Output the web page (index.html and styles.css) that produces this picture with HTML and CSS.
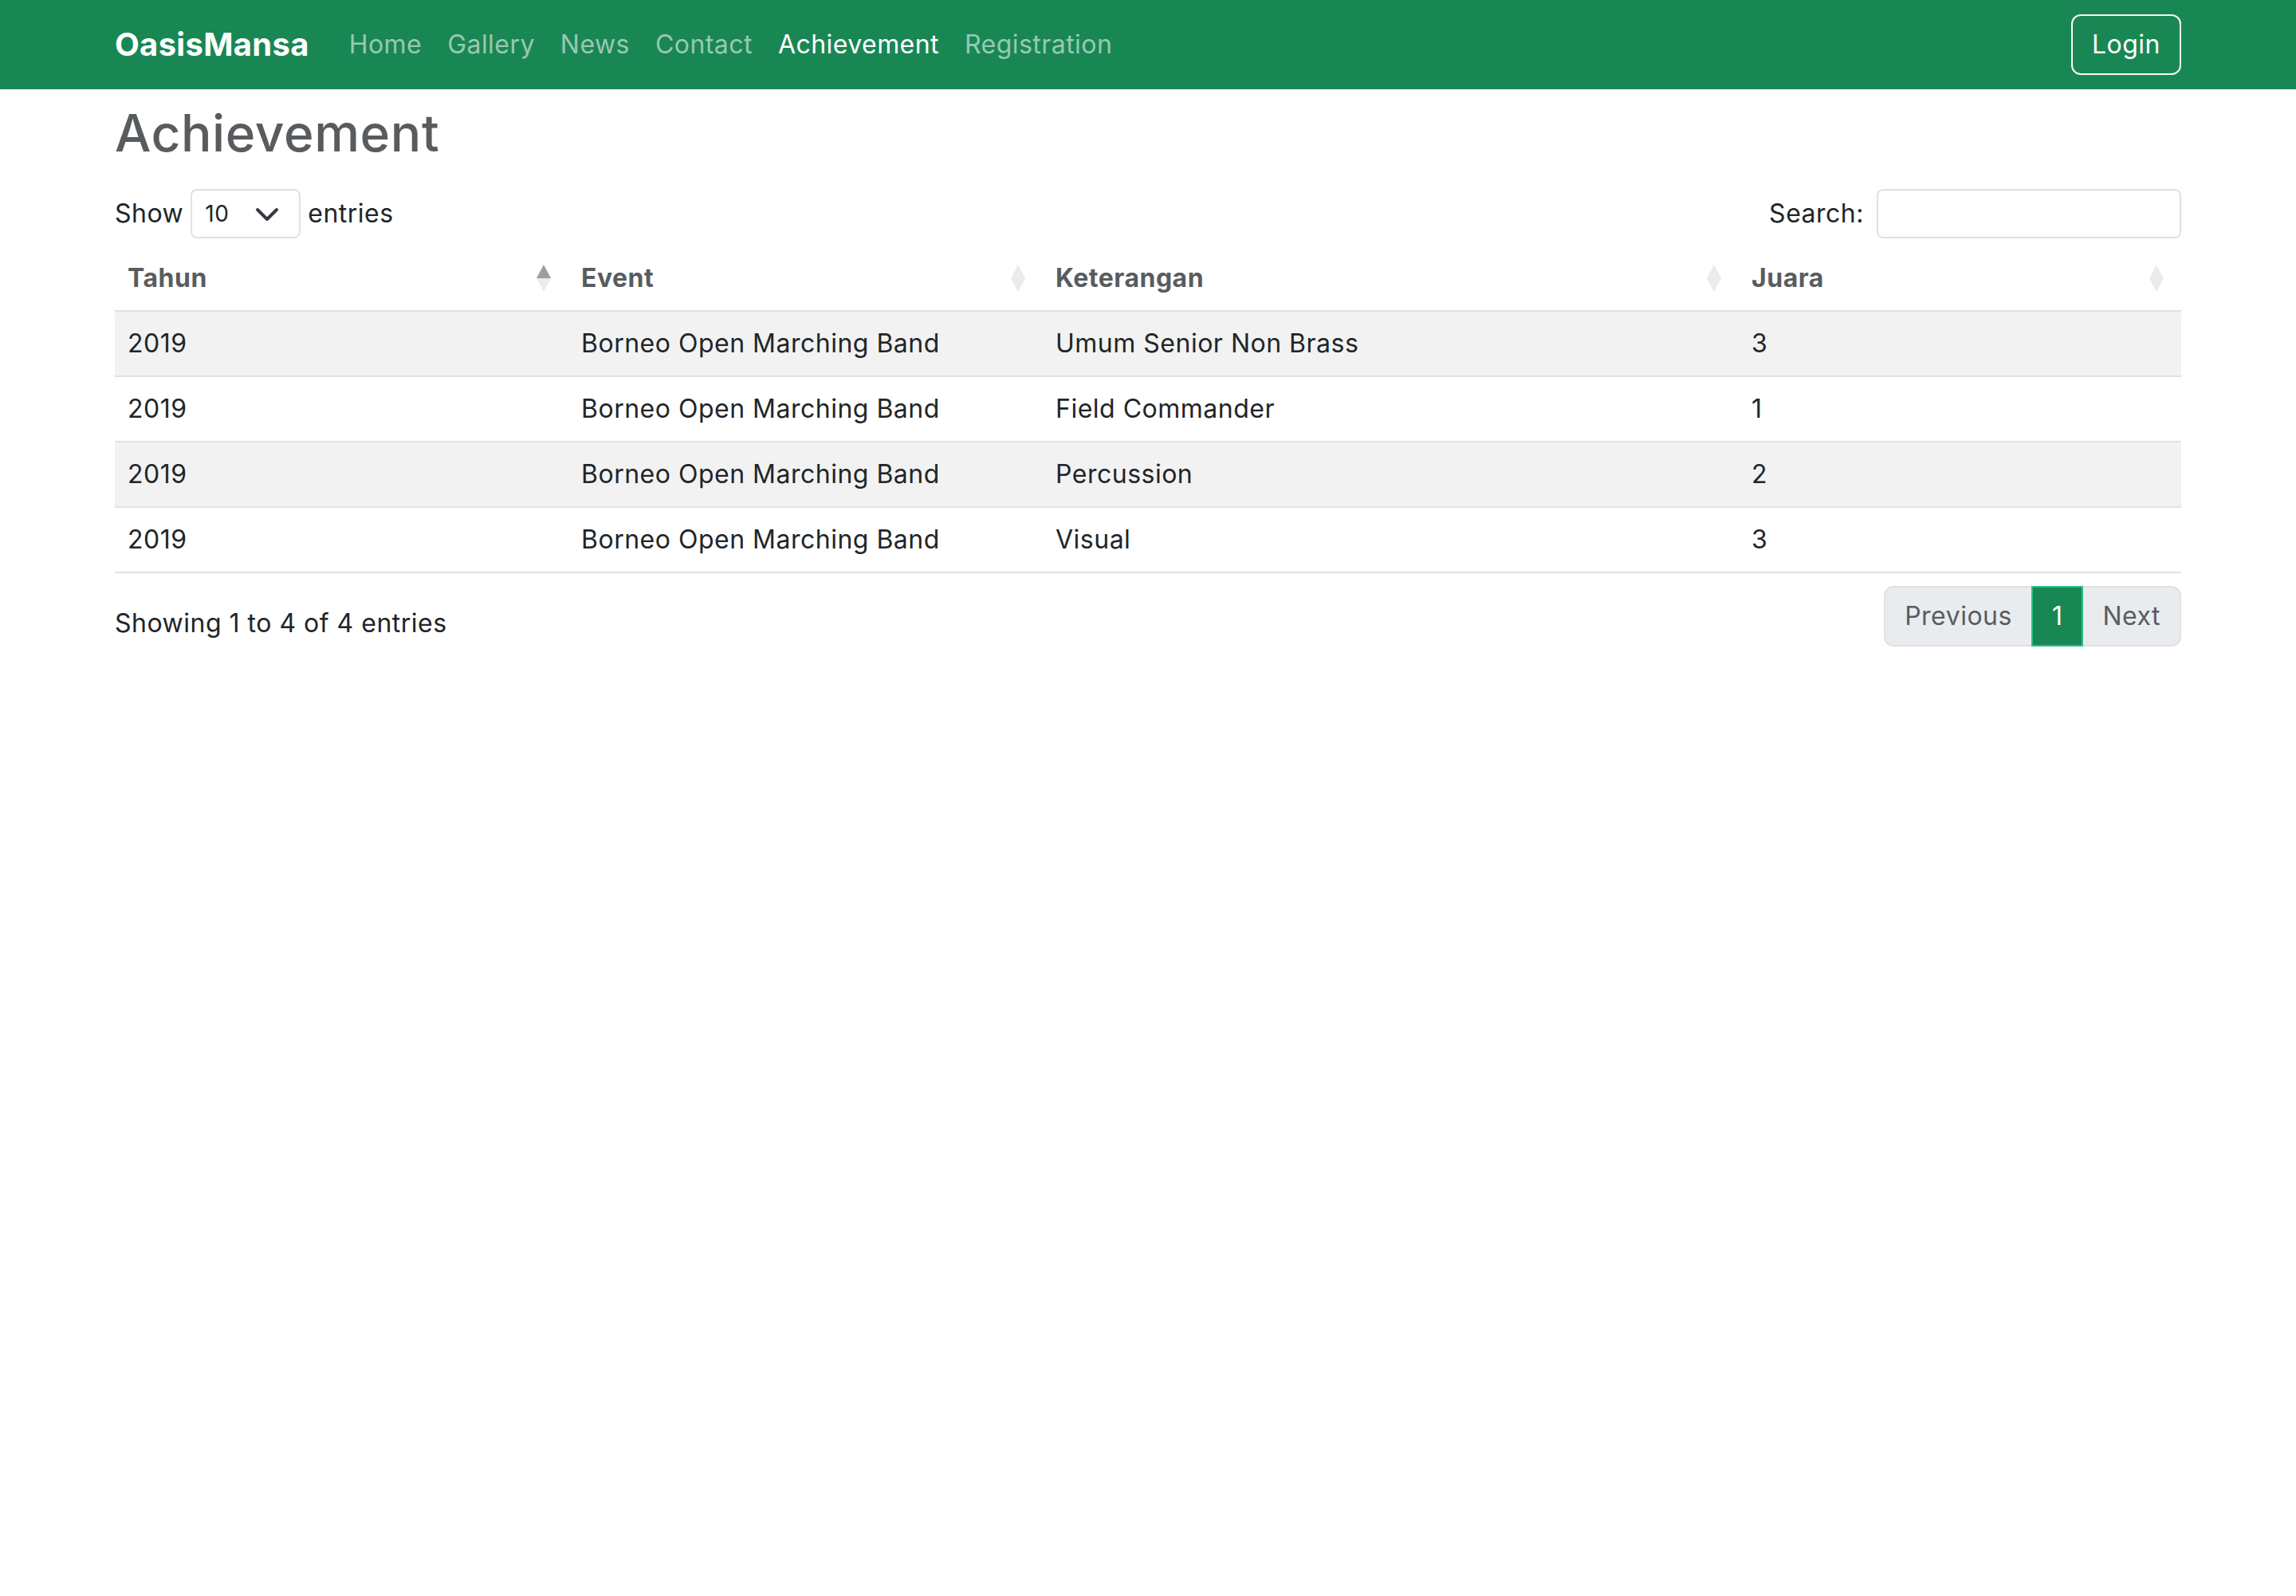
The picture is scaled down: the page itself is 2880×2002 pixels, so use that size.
FILE: index.html
```html
<!DOCTYPE html>
<html lang="en">
<head>
<meta charset="utf-8">
<title>Achievement - OasisMansa</title>
<link rel="stylesheet" href="styles.css">
</head>
<body>
<nav class="navbar">
  <div class="nav-inner">
    <a class="brand" href="#">OasisMansa</a>
    <ul class="nav-links">
      <li><a href="#">Home</a></li>
      <li><a href="#">Gallery</a></li>
      <li><a href="#">News</a></li>
      <li><a href="#">Contact</a></li>
      <li><a class="active" href="#">Achievement</a></li>
      <li><a href="#">Registration</a></li>
    </ul>
    <a class="btn-login" href="#">Login</a>
  </div>
</nav>
<main class="container">
  <h2 class="page-title">Achievement</h2>
  <div class="dt-top">
    <div class="dt-length">
      <span>Show</span>
      <span class="select">10<svg class="chev" viewBox="0 0 16 16" width="32" height="32"><path d="m2 5 6 6 6-6" fill="none" stroke="#343a40" stroke-width="2" stroke-linecap="round" stroke-linejoin="round"/></svg></span>
      <span>entries</span>
    </div>
    <div class="dt-search">
      <span>Search:</span>
      <span class="input"></span>
    </div>
  </div>
  <table class="dt-table">
    <colgroup>
      <col class="c1"><col class="c2"><col class="c3"><col class="c4">
    </colgroup>
    <thead>
      <tr>
        <th class="sort asc">Tahun</th>
        <th class="sort">Event</th>
        <th class="sort">Keterangan</th>
        <th class="sort">Juara</th>
      </tr>
    </thead>
    <tbody>
      <tr><td>2019</td><td>Borneo Open Marching Band</td><td>Umum Senior Non Brass</td><td>3</td></tr>
      <tr><td>2019</td><td>Borneo Open Marching Band</td><td>Field Commander</td><td>1</td></tr>
      <tr><td>2019</td><td>Borneo Open Marching Band</td><td>Percussion</td><td>2</td></tr>
      <tr><td>2019</td><td>Borneo Open Marching Band</td><td>Visual</td><td>3</td></tr>
    </tbody>
  </table>
  <div class="dt-bottom">
    <div class="dt-info">Showing 1 to 4 of 4 entries</div>
    <ul class="pagination">
      <li class="page disabled first"><span>Previous</span></li>
      <li class="page active"><span>1</span></li>
      <li class="page disabled last"><span>Next</span></li>
    </ul>
  </div>
</main>
</body>
</html>
```
FILE: styles.css
```css
* { box-sizing: border-box; }
html, body { margin: 0; padding: 0; }
body {
  font-family: Inter, "Noto Sans", sans-serif;
  font-size: 32px;
  line-height: 48px;
  letter-spacing: 0.5px;
  color: #212529;
  background: #fff;
}
a { text-decoration: none; }

.navbar { background: #198754; height: 112px; }
.nav-inner {
  max-width: 2592px;
  margin: 0 auto;
  height: 100%;
  display: flex;
  align-items: center;
}
.brand {
  color: #fff;
  font-size: 40px;
  font-weight: 700;
  line-height: 60px;
  margin-right: 34px;
  letter-spacing: 0.3px;
}
.nav-links {
  list-style: none;
  margin: 0;
  padding: 0;
  display: flex;
}
.nav-links a {
  display: block;
  padding: 16px 16px;
  color: #97c9b2;
  letter-spacing: 0.45px;
}
.nav-links a.active { color: #fff; }
.btn-login {
  margin-left: auto;
  color: #fff;
  border: 2px solid #f8f9fa;
  border-radius: 12px;
  padding: 12px 24px;
}

.container { max-width: 2592px; margin: 0 auto; }
.page-title {
  margin: 16px 0 32px;
  font-size: 64px;
  line-height: 77px;
  font-weight: 500;
  color: #595c5f;
  letter-spacing: 0.6px;
}

.dt-top {
  display: flex;
  justify-content: space-between;
  align-items: center;
  height: 62px;
}
.dt-length, .dt-search { display: flex; align-items: center; }
.dt-length { gap: 9px; }
.select {
  width: 138px;
  height: 62px;
  border: 2px solid #dee2e6;
  border-radius: 8px;
  font-size: 28px;
  padding-left: 16px;
  display: flex;
  align-items: center;
  position: relative;
}
.chev { position: absolute; right: 24px; top: 14px; width: 32px; height: 32px; }
.input {
  width: 382px;
  height: 62px;
  border: 2px solid #dee2e6;
  border-radius: 8px;
  margin-left: 16px;
}

.dt-table {
  width: 100%;
  table-layout: fixed;
  border-collapse: collapse;
  margin-top: 10px;
}
.c1 { width: 569px; }
.c2 { width: 595px; }
.c3 { width: 873px; }
.c4 { width: 555px; }
.dt-table th, .dt-table td {
  padding: 16px;
  text-align: left;
  border-bottom: 2px solid #dee2e6;
}
.dt-table th {
  font-weight: 700;
  color: #595c5f;
  position: relative;
  padding-right: 60px;
}
.dt-table tbody tr:nth-child(odd) td { background: #f2f2f2; }

.sort::before, .sort::after {
  content: "";
  position: absolute;
  right: 22px;
  width: 0;
  height: 0;
  border-left: 9px solid transparent;
  border-right: 9px solid transparent;
}
.sort::before { bottom: 50%; border-bottom: 17px solid #ebebec; }
.sort::after { top: 50%; border-top: 17px solid #ebebec; }
.sort.asc::before { border-bottom-color: #9c9e9f; }

.dt-bottom {
  display: flex;
  justify-content: space-between;
  align-items: flex-start;
  margin-top: 12px;
}
.dt-info { padding-top: 27px; }
.pagination {
  list-style: none;
  display: flex;
  margin: 4px 0;
  padding: 0;
}
.page span {
  display: block;
  padding: 12px 24px;
  border: 2px solid #dee2e6;
  background: #e9ecef;
  color: #595c5f;
}
.page + .page span { margin-left: -2px; }
.page.first span { border-radius: 12px 0 0 12px; }
.page.last span { border-radius: 0 12px 12px 0; }
.page.active span {
  background: #198754;
  border-color: #2bbf8c;
  color: #fff;
  position: relative;
}
```
